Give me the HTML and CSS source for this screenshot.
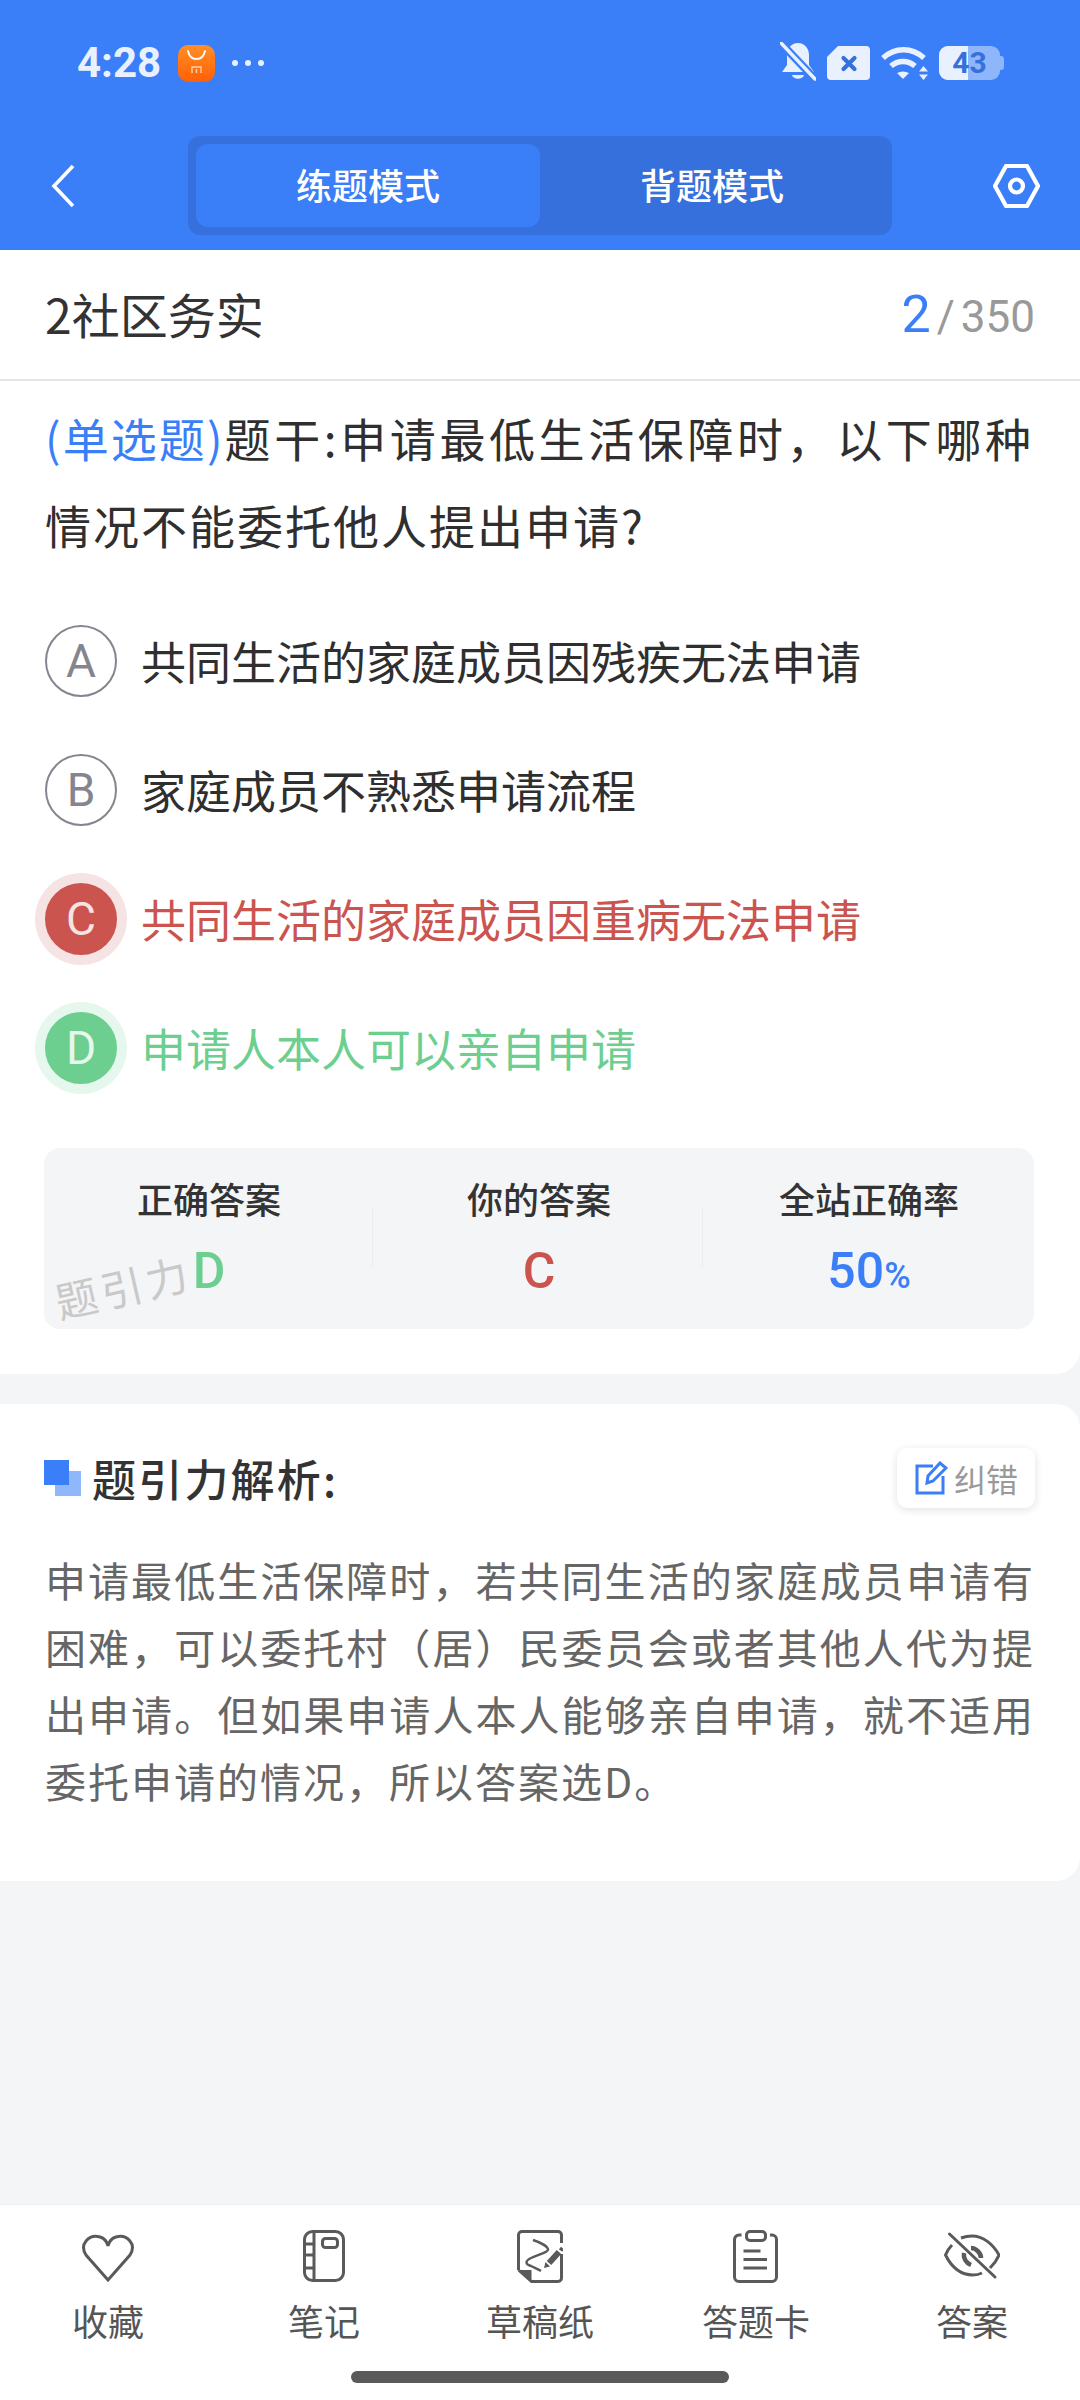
FILE: index.html
```html
<!DOCTYPE html>
<html lang="zh-CN">
<head>
  <meta charset="UTF-8" />
  <meta name="viewport" content="width=device-width, initial-scale=1.0" />
  <title>练题模式</title>
  <link rel="stylesheet" href="styles.css">
</head>
<body>
  <header class="top">
    <div class="status">
      <div class="status-left">
        <span class="time">4:28</span>
        <span class="shop-icon">
          <svg width="37" height="37" viewBox="0 0 37 37"><path d="M10 6c1 5 4 8 8.500 8s7.500-3 8.500-8" fill="none" stroke="#fff" stroke-width="1.800" stroke-linecap="round"/><path d="M14 28v-6h9v6M18.500 24v4" fill="none" stroke="#ffd0a8" stroke-width="1.400"/></svg>
        </span>
        <span class="dots"><i></i><i></i><i></i></span>
      </div>
      <div class="status-right">
        <svg width="36" height="39" viewBox="0 0 36 39"><path d="M18 1c7 0 11 6 11 12v10l5 7H2l5-7V13C7 7 11 1 18 1z" fill="#eaf1fe"/><path d="M12 33h12c-1 5-11 5-12 0z" fill="#eaf1fe"/><path d="M-2 -2l36 38" stroke="#3b7ff8" stroke-width="8"/><path d="M1 1l34 36" stroke="#eaf1fe" stroke-width="3.500" stroke-linecap="round"/></svg>
        <svg width="43" height="39" viewBox="0 -4 43 39"><path d="M11 0h28a4 4 0 0 1 4 4v26a4 4 0 0 1-4 4H4a4 4 0 0 1-4-4V11z" fill="#eaf1fe"/><path d="M16.500 12l11 11M27.500 12l-11 11" stroke="#3570dc" stroke-width="4.200" stroke-linecap="round"/></svg>
        <svg width="47" height="39" viewBox="0 -5 47 39"><path d="M2 11c12-11 29-11 41 0M10 19c7-6 17-6 24 0" fill="none" stroke="#eaf1fe" stroke-width="5.500"/><path d="M16 26c4-2 8-2 12 0l-6 6z" fill="#eaf1fe"/><path d="M42.500 19l4.500 5.500H38zM42.500 33l4.500-5.500H38z" fill="#eaf1fe"/></svg>
        <span class="battery"><span class="battery-level"></span><span class="battery-num">43</span></span>
      </div>
    </div>
    <div class="toolbar">
      <svg class="back" width="26" height="44" viewBox="0 0 26 44"><path d="M23 2L4 22l19 20" fill="none" stroke="#fff" stroke-width="3.600"/></svg>
      <div class="tabs">
        <div class="tab tab-on">练题模式</div>
        <div class="tab">背题模式</div>
      </div>
      <svg class="gear" width="47" height="44" viewBox="0 0 47 44"><path d="M13 2h21l11 20-11 20H13L2 22z" fill="none" stroke="#fff" stroke-width="4.200" stroke-linejoin="round"/><circle cx="23.500" cy="22" r="6.500" fill="none" stroke="#fff" stroke-width="4.200"/></svg>
    </div>
  </header>

  <main class="content">
    <section class="card card-question">
      <div class="title-row">
        <span class="title">2社区务实</span>
        <span class="progress"><b>2</b><em>/</em>350</span>
      </div>
      <p class="question"><span class="qtype">(单选题)</span>题干:申请最低生活保障时，以下哪种情况不能委托他人提出申请?</p>
      <ul class="options">
        <li class="option"><span class="circle">A</span>共同生活的家庭成员因残疾无法申请</li>
        <li class="option"><span class="circle">B</span>家庭成员不熟悉申请流程</li>
        <li class="option wrong"><span class="circle">C</span>共同生活的家庭成员因重病无法申请</li>
        <li class="option right"><span class="circle">D</span>申请人本人可以亲自申请</li>
      </ul>
      <div class="stats">
        <div class="stat">
          <div class="stat-label">正确答案</div>
          <div class="stat-value green">D</div>
        </div>
        <div class="stat">
          <div class="stat-label">你的答案</div>
          <div class="stat-value red">C</div>
        </div>
        <div class="stat">
          <div class="stat-label">全站正确率</div>
          <div class="stat-value blue">50<small>%</small></div>
        </div>
        <span class="watermark">题引力</span>
      </div>
    </section>

    <section class="card card-analysis">
      <div class="analysis-head">
        <span class="squares"></span>
        <h2>题引力解析:</h2>
        <span class="fix">
          <svg width="34" height="34" viewBox="0 0 34 34"><path d="M19 5H3v27h26V15" fill="none" stroke="#3b7ff8" stroke-width="3"/><path d="M13 22l1-7L26 2l6 5-13 13z" fill="none" stroke="#3b7ff8" stroke-width="3"/></svg>
          纠错
        </span>
      </div>
      <p class="analysis-text">申请最低生活保障时，若共同生活的家庭成员申请有困难，可以委托村（居）民委员会或者其他人代为提出申请。但如果申请人本人能够亲自申请，就不适用委托申请的情况，所以答案选D。</p>
    </section>
  </main>

  <footer class="bottom">
    <nav class="actions">
      <div class="action">
        <svg width="54" height="54" viewBox="0 -6 54 54"><path d="M27 45L5 20C-2 9 8-1 19 2c4 1 7 5 8 9 1-4 4-8 8-9 11-3 21 7 14 18z" fill="none" stroke="#5a5a5a" stroke-width="3"/></svg>
        <span>收藏</span>
      </div>
      <div class="action">
        <svg width="44" height="54" viewBox="0 0 44 54"><rect x="2.500" y="2.500" width="39" height="49" rx="8" fill="none" stroke="#5a5a5a" stroke-width="3"/><path d="M12 2.500v49M2.500 15h9.500M2.500 26h9.500M2.500 39h9.500" stroke="#5a5a5a" stroke-width="3"/><rect x="20.500" y="9.500" width="15" height="9" rx="3" fill="none" stroke="#5a5a5a" stroke-width="3"/></svg>
        <span>笔记</span>
      </div>
      <div class="action">
        <svg width="46" height="54" viewBox="0 -1 46 54"><path d="M1.500 40V5a3.500 3.500 0 0 1 3.500-3.500h36a3.500 3.500 0 0 1 3.500 3.500v8M44.500 24v24a3.500 3.500 0 0 1-3.500 3.500H14.500L1.500 40" fill="none" stroke="#5a5a5a" stroke-width="3"/><path d="M2 40h12.500v11.500z" fill="#5a5a5a"/><path d="M16 10c6 2 14 6 15 9s-8 5-17 9c-6 3-6 6 0 8 4 2 7 3 10 5" fill="none" stroke="#5a5a5a" stroke-width="2.400"/><path d="M32 33l10-11" stroke="#5a5a5a" stroke-width="6"/><path d="M43.500 20.500l2-2.500" stroke="#5a5a5a" stroke-width="4"/><path d="M27 38l1.500-6 4.500 4.500z" fill="#5a5a5a"/></svg>
        <span>草稿纸</span>
      </div>
      <div class="action">
        <svg width="46" height="54" viewBox="0 -1 46 54"><path d="M8.500 5H6a4.500 4.500 0 0 0-4.500 4.500V47a4.500 4.500 0 0 0 4.500 4.500h33a4.500 4.500 0 0 0 4.500-4.500V9.500A4.500 4.500 0 0 0 39 5h-2" fill="none" stroke="#5a5a5a" stroke-width="3"/><rect x="13.500" y="1.500" width="19" height="9" rx="3.500" fill="none" stroke="#5a5a5a" stroke-width="3"/><path d="M10.500 21h17M10.500 29.500h23.500M10.500 38h23.500" stroke="#5a5a5a" stroke-width="3"/></svg>
        <span>答题卡</span>
      </div>
      <div class="action">
        <svg width="56" height="54" viewBox="0 -4 56 54"><path d="M17 5c4-1.500 8-2 11-2 11 0 21 8 27 19-2 5-5 9-9 13M8 12c-3 3-5 6-6.500 10C8 35 18 42 29 42c3 0 6-.5 9-2" fill="none" stroke="#5a5a5a" stroke-width="3"/><path d="M20 20c-1 5 2 10 7 12M27 15c5 0 10 5 10 10" fill="none" stroke="#5a5a5a" stroke-width="4.500"/><path d="M5.500 1l45.500 43" stroke="#5a5a5a" stroke-width="3" stroke-linecap="round"/></svg>
        <span>答案</span>
      </div>
    </nav>
    <div class="home-bar"></div>
  </footer>
</body>
</html>
```

FILE: styles.css
```css
* {
  box-sizing: border-box;
}

body {
  margin: 0;
  width: 1080px;
  height: 2400px;
  display: flex;
  flex-direction: column;
  background-color: #f4f5f7;
  font-family: "Noto Sans CJK SC", "Noto Sans", sans-serif;
  color: #2f2f2f;
}

/* top blue area */
.top {
  height: 250px;
  background-color: #3b7ff8;
  color: #fff;
  display: flex;
  flex-direction: column;
}

.status {
  height: 136px;
  padding: 38px 80px 0 77px;
  display: flex;
  justify-content: space-between;
  align-items: flex-start;
}

.status-left {
  display: flex;
  align-items: center;
  gap: 17px;
}

.time {
  font-family: Roboto, sans-serif;
  font-weight: 700;
  font-size: 42px;
  line-height: 50px;
  color: #eaf1fe;
}

.shop-icon {
  width: 37px;
  height: 37px;
  border-radius: 10px;
  background-image: linear-gradient(#ff8f26, #ff5f06);
  display: block;
}

.shop-icon svg {
  display: block;
}

.dots {
  display: flex;
  gap: 7px;
}

.dots i {
  width: 6px;
  height: 6px;
  border-radius: 50%;
  background-color: #eaf1fe;
}

.status-right {
  display: flex;
  align-items: flex-start;
  gap: 11px;
  padding-top: 4px;
}

.battery {
  position: relative;
  width: 61px;
  height: 34px;
  margin-top: 4px;
  border-radius: 9px;
  background-color: #8fb5fb;
  text-align: center;
}

.battery::after {
  content: "";
  position: absolute;
  right: -4px;
  top: 10px;
  width: 4px;
  height: 14px;
  border-radius: 0 3px 3px 0;
  background-color: #8fb5fb;
}

.battery-level {
  position: absolute;
  left: 0;
  top: 0;
  bottom: 0;
  width: 29px;
  border-radius: 9px 0 0 9px;
  background-color: #eaf1fe;
}

.battery-num {
  position: relative;
  font-family: Roboto, sans-serif;
  font-weight: 700;
  font-size: 30px;
  line-height: 34px;
  color: #3570dc;
}

.toolbar {
  height: 99px;
  padding: 0 40px 0 50px;
  display: flex;
  align-items: center;
}

.back {
  margin-right: 112px;
}

.gear {
  margin-left: auto;
}

.tabs {
  width: 704px;
  height: 99px;
  padding: 8px;
  background-color: #3570dc;
  border-radius: 12px;
  display: flex;
}

.tab {
  flex: 1;
  border-radius: 12px;
  font-size: 36px;
  line-height: 81px;
  font-weight: 500;
  text-align: center;
}

.tab-on {
  background-color: #3b7ff8;
}

/* cards */
.content {
  flex: 1;
  display: flex;
  flex-direction: column;
  gap: 30px;
}

.card {
  background-color: #fff;
  border-radius: 0 0 24px 0;
}

.card-question {
  height: 1124px;
}

.title-row {
  height: 131px;
  padding: 0 45px;
  border-bottom: 2px solid #e5e5e5;
  display: flex;
  align-items: center;
  justify-content: space-between;
}

.title {
  margin-bottom: 4px;
  font-size: 48px;
  color: #333;
}

.progress {
  font-family: Roboto, sans-serif;
  font-size: 44px;
  color: #999;
}

.progress b {
  font-weight: 400;
  font-size: 52px;
  color: #3b7ff8;
}

.progress em {
  font-style: normal;
  margin: 0 6px;
}

.question {
  margin: 13px 47px 0 45px;
  font-size: 46px;
  line-height: 87px;
  letter-spacing: 2px;
  text-align: justify;
  color: #2f2f2f;
}

.qtype {
  letter-spacing: 0.5px;
  color: #3b7ff8;
}

.options {
  list-style: none;
  margin: 28px 0 0;
  padding: 0;
}

.option {
  height: 129px;
  padding-left: 45px;
  display: flex;
  align-items: center;
  gap: 24px;
  font-size: 45px;
}

.circle {
  width: 72px;
  height: 72px;
  border-radius: 50%;
  border: 2px solid #85858f;
  color: #85858f;
  font-family: Roboto, sans-serif;
  font-size: 46px;
  line-height: 68px;
  text-align: center;
}

.wrong {
  color: #cb544f;
}

.wrong .circle {
  background-color: #cb544f;
  border-color: #cb544f;
  color: #f6e3e2;
  box-shadow: 0 0 0 10px #f6e3e3;
}

.right {
  color: #6ccf8f;
}

.right .circle {
  background-color: #6ccf8f;
  border-color: #6ccf8f;
  color: #e6f7ec;
  box-shadow: 0 0 0 10px #e6f7ed;
}

.stats {
  position: relative;
  margin: 36px 46px 0 44px;
  height: 181px;
  background-color: #f4f5f7;
  border-radius: 16px;
  display: flex;
}

.stat {
  flex: 1;
  padding-top: 26px;
  text-align: center;
  background-image: linear-gradient(#ebecee, #ebecee);
  background-repeat: no-repeat;
  background-size: 1px 60px;
  background-position: calc(100% - 1px) 60px;
}

.stat:last-of-type {
  background-image: none;
}

.stat-label {
  font-size: 36px;
  line-height: 48px;
  font-weight: 500;
  color: #333;
}

.stat-value {
  margin-top: 20px;
  font-family: Roboto, sans-serif;
  font-size: 50px;
  line-height: 58px;
  font-weight: 500;
}

.stat-value small {
  font-size: 36px;
}

.green {
  color: #6ccf8f;
}

.red {
  color: #cb544f;
}

.blue {
  color: #3b7ff8;
}

/* sits over the stats box, tilted */
.watermark {
  position: absolute;
  left: 10px;
  top: 113px;
  font-size: 42px;
  line-height: 50px;
  letter-spacing: 4px;
  color: #c9c9c9;
  transform: rotate(-13deg);
}

.card-analysis {
  height: 477px;
  border-radius: 0 24px 24px 0;
}

.analysis-head {
  height: 142px;
  padding: 6px 45px 0 44px;
  display: flex;
  align-items: center;
}

.squares {
  width: 37px;
  height: 36px;
  margin-right: 11px;
  background-image: linear-gradient(#3b7ff8, #3b7ff8), linear-gradient(#8fb8fb, #8fb8fb);
  background-size: 25px 25px, 26px 25px;
  background-position: left top, right bottom;
  background-repeat: no-repeat;
}

.analysis-head h2 {
  flex: 1;
  margin: 0;
  font-size: 44px;
  font-weight: 500;
  letter-spacing: 2.200px;
  color: #333;
}

.fix {
  width: 138px;
  height: 60px;
  border-radius: 10px;
  box-shadow: 0 2px 8px rgba(0, 0, 0, 0.12);
  display: flex;
  align-items: center;
  justify-content: center;
  gap: 6px;
  font-size: 32px;
  color: #9a9a9a;
}

.analysis-text {
  margin: 0 45px;
  font-size: 41px;
  line-height: 67px;
  letter-spacing: 2px;
  text-align: justify;
  color: #666;
}

/* bottom bar */
.bottom {
  height: 196px;
  background-color: #fff;
  border-top: 1px solid #eeeeee;
}

.actions {
  padding-top: 24px;
  display: flex;
}

.action {
  flex: 1;
  height: 114px;
  display: flex;
  flex-direction: column;
  align-items: center;
  justify-content: space-between;
}

.action svg {
  flex: none;
}

.action span {
  font-size: 36px;
  line-height: 46px;
  color: #555;
}

.home-bar {
  width: 378px;
  height: 12px;
  margin: 28px auto 0;
  border-radius: 6px;
  background-color: #5a5a5a;
}
```
